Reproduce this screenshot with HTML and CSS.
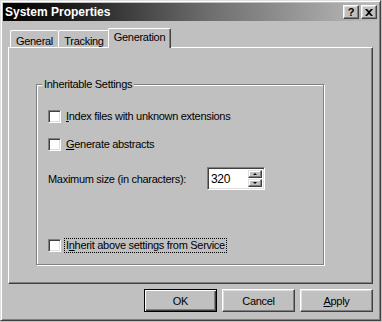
FILE: index.html
```html
<!DOCTYPE html>
<html lang="en">
<head>
    <meta charset="UTF-8">
    <meta name="viewport" content="width=device-width, initial-scale=1.0">
    <title>System Properties</title>
    <link rel="stylesheet" href="styles.css">
</head>
<body>
    <div class="window">
        <div class="titlebar">
            <span class="title">System Properties</span>
            <div class="caption-buttons">
                <button class="cap-btn help" type="button">?</button>
                <button class="cap-btn close" type="button">
                    <svg width="8" height="7" viewBox="0 0 8 7">
                        <path d="M0 0h2l2 2 2-2h2L5 3.5 8 7H6L4 5 2 7H0l3-3.5z" fill="#000"/>
                    </svg>
                </button>
            </div>
        </div>
        <div class="content">
            <div class="tabs">
                <div class="tab tab-general">General</div>
                <div class="tab tab-tracking">Tracking</div>
                <div class="tab tab-generation active">Generation</div>
            </div>
            <div class="panel">
                <div class="group">
                    <span class="legend">Inheritable Settings</span>
                    <label class="check row-first">
                        <span class="box"></span>
                        <span class="check-text"><u>I</u>ndex files with unknown extensions</span>
                    </label>
                    <label class="check row-second">
                        <span class="box"></span>
                        <span class="check-text"><u>G</u>enerate abstracts</span>
                    </label>
                    <div class="size-row">
                        <span class="size-label">Maximum size (in characters):</span>
                        <div class="spin">
                            <span class="spin-value">320</span>
                            <div class="spin-btns">
                                <span class="spin-btn"><span class="arrow up"></span></span>
                                <span class="spin-btn"><span class="arrow down"></span></span>
                            </div>
                        </div>
                    </div>
                    <label class="check row-inherit">
                        <span class="box"></span>
                        <span class="check-text focused">I<u>n</u>herit above settings from Service</span>
                    </label>
                </div>
            </div>
            <div class="buttons">
                <button class="btn default" type="button">OK</button>
                <button class="btn" type="button">Cancel</button>
                <button class="btn" type="button"><u>A</u>pply</button>
            </div>
        </div>
    </div>
</body>
</html>
```

FILE: styles.css
```css
body {
    margin: 0;
    padding: 0;
    background-color: #c0c0c0;
    font-family: "Liberation Sans", Arial, sans-serif;
    font-size: 11px;
    letter-spacing: -0.3px;
    color: #000;
}
.window {
    width: 381px;
    height: 321px;
    box-sizing: border-box;
    padding: 2px;
    background-color: #c0c0c0;
    border: 1px solid;
    border-color: #dfdfdf #404040 #404040 #dfdfdf;
    box-shadow: inset 1px 1px 0 #fff, inset -1px -1px 0 #808080;
}
.titlebar {
    height: 18px;
    display: flex;
    align-items: center;
    justify-content: space-between;
    background: linear-gradient(to right, #000 0%, #1c1c1c 18%, #6e6e6e 55%, #bcbcbc 100%);
}
.title {
    color: #fff;
    font-weight: bold;
    font-size: 12px;
    letter-spacing: 0;
    padding-left: 2px;
}
.caption-buttons {
    display: flex;
    gap: 2px;
    margin-right: 1px;
}
.cap-btn {
    width: 16px;
    height: 14px;
    padding: 0;
    margin: 0;
    display: flex;
    align-items: center;
    justify-content: center;
    background-color: #c0c0c0;
    border: 1px solid;
    border-color: #fff #404040 #404040 #fff;
    box-shadow: inset -1px -1px 0 #808080, inset 1px 1px 0 #dfdfdf;
    font-family: "Liberation Sans", Arial, sans-serif;
    font-weight: bold;
    font-size: 11px;
    line-height: 12px;
    color: #000;
}
.content {
    padding: 7px 5px 0 5px;
}
.tabs {
    display: flex;
    align-items: flex-end;
    height: 19px;
    padding-left: 2px;
    position: relative;
    z-index: 1;
}
.tab {
    height: 17px;
    box-sizing: border-box;
    display: flex;
    align-items: center;
    justify-content: center;
    padding-top: 3px;
    border: 1px solid;
    border-bottom: none;
    border-color: #fff #404040 #404040 #fff;
    border-radius: 2px 2px 0 0;
    box-shadow: inset -1px 0 0 #808080;
    background-color: #c0c0c0;
}
.tab-general {
    width: 48px;
    border-right: none;
    box-shadow: none;
}
.tab-tracking {
    width: 52px;
}
.tab-generation {
    width: 63px;
}
.tab.active {
    height: 20px;
    margin-left: -2px;
    margin-bottom: -1px;
    padding-top: 0;
    padding-bottom: 3px;
}
.panel {
    height: 237px;
    box-sizing: border-box;
    padding: 36px 0 0 27px;
    border: 1px solid;
    border-color: #fff #404040 #404040 #fff;
    box-shadow: inset -1px -1px 0 #808080;
}
.group {
    position: relative;
    width: 288px;
    height: 181px;
    box-sizing: border-box;
    padding: 25px 0 0 11px;
    border: 1px solid #808080;
    box-shadow: 1px 1px 0 #fff, inset 1px 1px 0 #fff;
}
.legend {
    position: absolute;
    top: -7px;
    left: 5px;
    padding: 0 2px;
    line-height: 13px;
    background-color: #c0c0c0;
}
.check {
    display: flex;
    align-items: center;
    height: 13px;
}
.row-second {
    margin-top: 15px;
}
.row-inherit {
    margin-top: 49px;
}
.box {
    width: 13px;
    height: 13px;
    box-sizing: border-box;
    background-color: #fff;
    border: 1px solid;
    border-color: #808080 #fff #fff #808080;
    box-shadow: inset 1px 1px 0 #404040, inset -1px -1px 0 #dfdfdf;
    margin-right: 3px;
}
.check-text {
    padding: 0 1px;
    line-height: 13px;
    border: 1px dotted transparent;
}
.check-text.focused {
    border-color: #000;
}
.size-row {
    display: flex;
    align-items: center;
    margin-top: 16px;
    height: 23px;
}
.size-label {
    width: 159px;
}
.spin {
    width: 58px;
    height: 23px;
    box-sizing: border-box;
    display: flex;
    align-items: center;
    justify-content: space-between;
    background-color: #fff;
    border: 1px solid;
    border-color: #808080 #fff #fff #808080;
    box-shadow: inset 1px 1px 0 #404040, inset -1px -1px 0 #dfdfdf;
    padding: 2px 2px 2px 3px;
}
.spin-value {
    font-size: 12px;
}
.spin-btns {
    display: flex;
    flex-direction: column;
    height: 17px;
}
.spin-btn {
    width: 14px;
    height: 8px;
    box-sizing: border-box;
    display: flex;
    align-items: center;
    justify-content: center;
    background-color: #c0c0c0;
    border: 1px solid;
    border-color: #dfdfdf #404040 #404040 #dfdfdf;
    box-shadow: inset -1px -1px 0 #808080, inset 1px 1px 0 #fff;
}
.spin-btn + .spin-btn {
    margin-top: 1px;
}
.arrow {
    width: 0;
    height: 0;
    border-left: 2px solid transparent;
    border-right: 2px solid transparent;
}
.arrow.up {
    border-bottom: 2px solid #000;
}
.arrow.down {
    border-top: 2px solid #000;
}
.buttons {
    display: flex;
    justify-content: flex-end;
    gap: 5px;
    margin-top: 5px;
}
.btn {
    width: 73px;
    height: 23px;
    padding: 0;
    margin: 0;
    background-color: #c0c0c0;
    font-family: "Liberation Sans", Arial, sans-serif;
    font-size: 11px;
    letter-spacing: -0.3px;
    color: #000;
    border: 1px solid;
    border-color: #fff #404040 #404040 #fff;
    box-shadow: inset -1px -1px 0 #808080, inset 1px 1px 0 #dfdfdf;
}
.btn.default {
    border: 1px solid #000;
    box-shadow: inset 1px 1px 0 #fff, inset -1px -1px 0 #404040, inset -2px -2px 0 #808080;
}
```
